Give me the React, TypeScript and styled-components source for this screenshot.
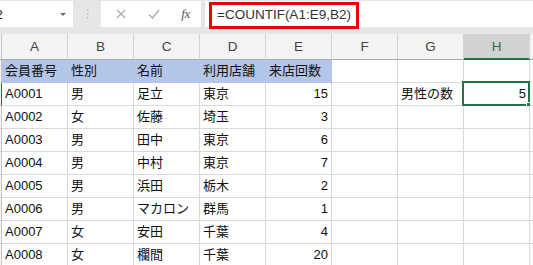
import React from 'react';
import styled, { createGlobalStyle } from 'styled-components';

const Global = createGlobalStyle`
  *, *::before, *::after { box-sizing: border-box; }
  html, body { margin: 0; padding: 0; background: #e6e6e6; }
  body { font-family: "Liberation Sans", "Noto Sans CJK JP", sans-serif; }
`;

const GREEN = '#217346';
const GRID = '#d9d9d9';
const BLUE = '#b4c6e7';

const Page = styled.div`
  width: 533px;
  height: 265px;
  overflow: hidden;
  background: #e6e6e6;
  display: flex;
  flex-direction: column;
`;

const FormulaBar = styled.div`
  display: flex;
  height: 26px;
  margin-top: 1px;
  flex-shrink: 0;
`;

const NameBox = styled.div`
  width: 73px;
  background: #fff;
  display: flex;
  align-items: center;
  overflow: hidden;
  font-size: 13px;
  color: #222;
`;

const NameText = styled.span`
  margin-left: -14px;
`;

const DropArrow = styled.span`
  margin-left: auto;
  margin-right: 7px;
  width: 0;
  height: 0;
  border-left: 3px solid transparent;
  border-right: 3px solid transparent;
  border-top: 3px solid #6a6a6a;
`;

const Dots = styled.div`
  width: 28px;
  display: flex;
  align-items: center;
  justify-content: center;
`;

const FuncBox = styled.div`
  width: 100px;
  background: #fff;
  display: grid;
  grid-template-columns: 33px 33px 1fr;
  padding-left: 3px;
  align-items: center;
  justify-items: center;
`;

const Fx = styled.span`
  font-family: "Liberation Serif", serif;
  font-style: italic;
  font-size: 13px;
  color: #555;
  letter-spacing: -0.5px;
`;

const FormulaBox = styled.div`
  flex: 1;
  margin-left: 4px;
  background: #fff;
  position: relative;
  display: flex;
  align-items: center;
  padding-left: 12px;
  font-size: 13.5px;
  color: #333;
`;

const Highlight = styled.div`
  position: absolute;
  left: 4px;
  top: 1px;
  width: 150px;
  height: 27px;
  border: 3px solid #ee0000;
`;

const Sheet = styled.div`
  margin-top: 7px;
  display: grid;
  grid-template-columns: 2px repeat(8, 66px) 1fr;
  background: #fff;
`;

const Corner = styled.div`
  height: 26px;
  background: #f3f3f3;
  border-right: 1px solid #c6c6c6;
  border-bottom: 1px solid #ababab;
`;

const ColHeader = styled.div<{ $active?: boolean }>`
  height: 26px;
  background: ${p => (p.$active ? '#d2d2d2' : '#f3f3f3')};
  color: ${p => (p.$active ? GREEN : '#444')};
  border-right: 1px solid #d4d4d4;
  border-bottom: ${p => (p.$active ? `2px solid ${GREEN}` : '1px solid #ababab')};
  display: flex;
  align-items: center;
  justify-content: center;
  font-size: 13.5px;
`;

const RowEdge = styled.div<{ $active?: boolean }>`
  height: 23px;
  background: #f3f3f3;
  border-right: 1px solid ${p => (p.$active ? GREEN : '#c6c6c6')};
  border-bottom: 1px solid #d4d4d4;
`;

const Cell = styled.div<{ $fill?: boolean; $right?: boolean }>`
  position: relative;
  height: 23px;
  line-height: 22px;
  padding: 0 3px;
  font-size: 13px;
  color: #111;
  white-space: nowrap;
  text-align: ${p => (p.$right ? 'right' : 'left')};
  background: ${p => (p.$fill ? BLUE : '#fff')};
  border-right: 1px solid ${p => (p.$fill ? BLUE : GRID)};
  border-bottom: 1px solid ${p => (p.$fill ? BLUE : GRID)};
`;

const Selection = styled.div`
  position: absolute;
  left: -2px;
  top: -2px;
  right: -1px;
  bottom: -1px;
  border: 2px solid ${GREEN};
  pointer-events: none;
`;

const Handle = styled.div`
  position: absolute;
  right: -3px;
  bottom: -3px;
  width: 5px;
  height: 5px;
  background: ${GREEN};
  border: 1px solid #fff;
`;

type Val = string | number;

const header: Val[] = ['会員番号', '性別', '名前', '利用店舗', '来店回数'];
const data: Val[][] = [
  ['A0001', '男', '足立', '東京', 15],
  ['A0002', '女', '佐藤', '埼玉', 3],
  ['A0003', '男', '田中', '東京', 6],
  ['A0004', '男', '中村', '東京', 7],
  ['A0005', '男', '浜田', '栃木', 2],
  ['A0006', '男', 'マカロン', '群馬', 1],
  ['A0007', '女', '安田', '千葉', 4],
  ['A0008', '女', '欄間', '千葉', 20],
];

const cols = ['A', 'B', 'C', 'D', 'E', 'F', 'G', 'H'];

export default function App() {
  const rows: React.ReactNode[] = [];

  rows.push(<Corner key="corner" />);
  cols.forEach(c => (
    rows.push(<ColHeader key={`h${c}`} $active={c === 'H'}>{c}</ColHeader>)
  ));
  rows.push(<ColHeader key="hI" />);

  // row 1 (header of table)
  rows.push(<RowEdge key="e1" />);
  header.forEach((v, i) => rows.push(<Cell key={`r1c${i}`} $fill>{v}</Cell>));
  rows.push(<Cell key="r1F" />, <Cell key="r1G" />, <Cell key="r1H" />, <Cell key="r1I" />);

  data.forEach((r, ri) => {
    const first = ri === 0;
    rows.push(<RowEdge key={`e${ri}`} $active={first} />);
    r.forEach((v, ci) => (
      rows.push(
        <Cell key={`r${ri}c${ci}`} $right={typeof v === 'number'}>
          {v}
        </Cell>
      )
    ));
    rows.push(<Cell key={`r${ri}F`} />);
    rows.push(<Cell key={`r${ri}G`}>{first ? '男性の数' : ''}</Cell>);
    rows.push(
      <Cell key={`r${ri}H`} $right>
        {first ? 5 : ''}
        {first && (
          <Selection>
            <Handle />
          </Selection>
        )}
      </Cell>
    );
    rows.push(<Cell key={`r${ri}I`} />);
  });

  return (
    <Page>
      <Global />
      <FormulaBar>
        <NameBox>
          <NameText>H2</NameText>
          <DropArrow />
        </NameBox>
        <Dots>
          <svg width="3" height="10" viewBox="0 0 3 10">
            <rect x="1" y="0" width="1.4" height="1.4" fill="#b0b0b0" />
            <rect x="1" y="4" width="1.4" height="1.4" fill="#b0b0b0" />
            <rect x="1" y="8" width="1.4" height="1.4" fill="#b0b0b0" />
          </svg>
        </Dots>
        <FuncBox>
          <svg width="10" height="10" viewBox="0 0 10 10">
            <path d="M1 1 L9 9 M9 1 L1 9" stroke="#a8a8a8" strokeWidth="1.1" fill="none" />
          </svg>
          <svg width="12" height="10" viewBox="0 0 12 10">
            <path d="M1 5.5 L4.5 9 L11 1" stroke="#a8a8a8" strokeWidth="1.3" fill="none" />
          </svg>
          <Fx>fx</Fx>
        </FuncBox>
        <FormulaBox>
          =COUNTIF(A1:E9,B2)
          <Highlight />
        </FormulaBox>
      </FormulaBar>
      <Sheet>{rows}</Sheet>
    </Page>
  );
}
